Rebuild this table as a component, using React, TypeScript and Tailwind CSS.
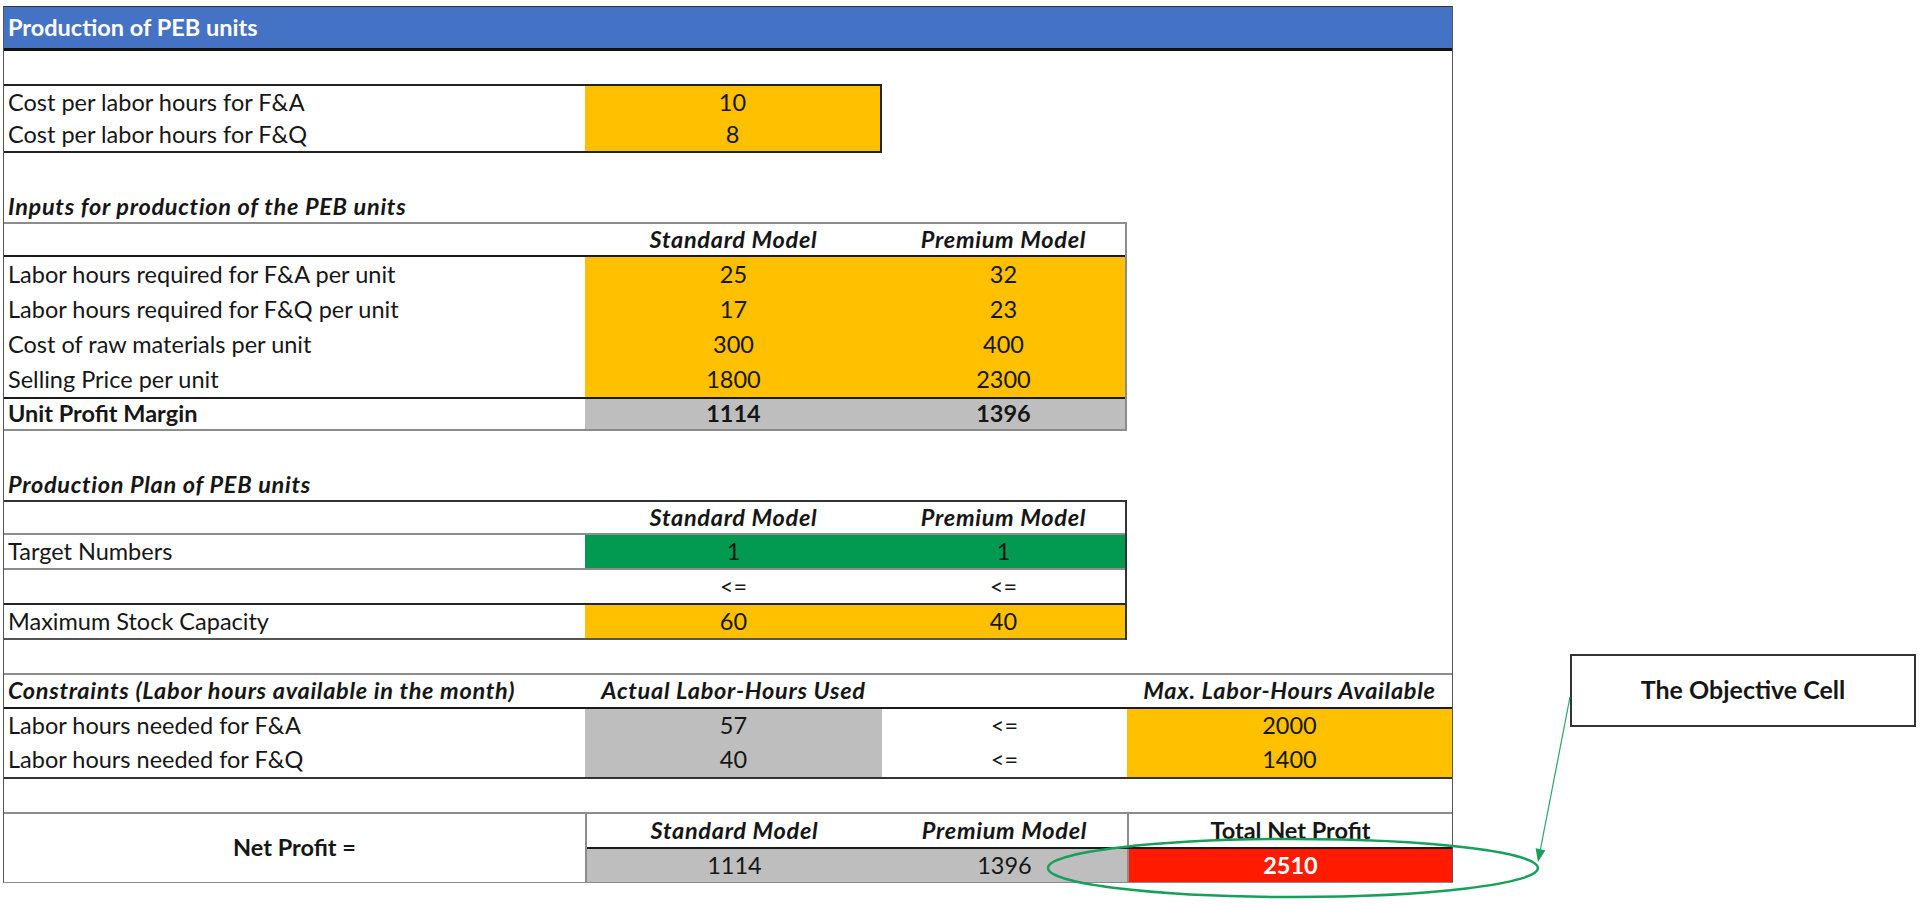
import * as React from 'react'
import clsx from 'clsx'

const yellow = 'bg-[#ffc000]'
const gray = 'bg-[#bfbebf]'
const heading = 'font-bold italic tracking-[0.7px]'

function Cell({
  w,
  children,
  className,
}: {
  w: string
  children?: React.ReactNode
  className?: string
}) {
  return <div className={clsx('flex h-full shrink-0 items-center justify-center', w, className)}>{children}</div>
}

function Label({ children, className }: { children?: React.ReactNode; className?: string }) {
  return (
    <div className={clsx('flex h-full w-[581px] shrink-0 items-center pl-[4px]', className)}>{children}</div>
  )
}

function Title({ children }: { children: React.ReactNode }) {
  return <div className={clsx('flex h-[34px] items-end pb-[4px] pl-[4px]', heading)}>{children}</div>
}

function InputsTable() {
  const rows = [
    ['Labor hours required for F&A per unit', '25', '32'],
    ['Labor hours required for F&Q per unit', '17', '23'],
    ['Cost of raw materials per unit', '300', '400'],
    ['Selling Price per unit', '1800', '2300'],
  ]
  return (
    <div className="w-[1123px] border-r-2 border-[#8c8c8c]">
      <div className={clsx('flex h-[35px] border-t-2 border-b-2 border-t-[#8c8c8c] border-b-[#1a1a1a]', heading)}>
        <Label />
        <Cell w="w-[297px]">Standard Model</Cell>
        <Cell w="w-[243px]">Premium Model</Cell>
      </div>
      {rows.map(([label, a, b]) => (
        <div key={label} className="flex h-[35px]">
          <Label>{label}</Label>
          <Cell w="w-[297px]" className={yellow}>
            {a}
          </Cell>
          <Cell w="w-[243px]" className={yellow}>
            {b}
          </Cell>
        </div>
      ))}
      <div className="flex h-[34px] border-t-2 border-b-2 border-t-[#1a1a1a] border-b-[#8c8c8c] font-bold">
        <Label>Unit Profit Margin</Label>
        <Cell w="w-[297px]" className={gray}>
          1114
        </Cell>
        <Cell w="w-[243px]" className={gray}>
          1396
        </Cell>
      </div>
    </div>
  )
}

function PlanTable() {
  return (
    <div className="w-[1123px] border-r-2 border-[#333]">
      <div className={clsx('flex h-[35px] border-t-2 border-b-2 border-t-[#333] border-b-[#8c8c8c]', heading)}>
        <Label />
        <Cell w="w-[297px]">Standard Model</Cell>
        <Cell w="w-[243px]">Premium Model</Cell>
      </div>
      <div className="flex h-[35px] border-b-2 border-[#8c8c8c]">
        <Label>Target Numbers</Label>
        <Cell w="w-[297px]" className="bg-[#019a50]">
          1
        </Cell>
        <Cell w="w-[243px]" className="bg-[#019a50]">
          1
        </Cell>
      </div>
      <div className="flex h-[35px] border-b-2 border-[#262626]">
        <Label />
        <Cell w="w-[297px]">&lt;=</Cell>
        <Cell w="w-[243px]">&lt;=</Cell>
      </div>
      <div className="flex h-[35px] border-b-2 border-[#555]">
        <Label>Maximum Stock Capacity</Label>
        <Cell w="w-[297px]" className={yellow}>
          60
        </Cell>
        <Cell w="w-[243px]" className={yellow}>
          40
        </Cell>
      </div>
    </div>
  )
}

function Constraints() {
  return (
    <div className="border-t-2 border-b-2 border-t-[#8c8c8c] border-b-[#333]">
      <div className={clsx('flex h-[34px] border-b-2 border-[#1a1a1a]', heading)}>
        <Label>Constraints (Labor hours available in the month)</Label>
        <Cell w="w-[297px]">Actual Labor-Hours Used</Cell>
        <Cell w="w-[245px]" />
        <Cell w="w-[325px]">Max. Labor-Hours Available</Cell>
      </div>
      {[
        ['Labor hours needed for F&A', '57', '2000'],
        ['Labor hours needed for F&Q', '40', '1400'],
      ].map(([label, used, max]) => (
        <div key={label} className="flex h-[34px]">
          <Label>{label}</Label>
          <Cell w="w-[297px]" className={gray}>
            {used}
          </Cell>
          <Cell w="w-[245px]">&lt;=</Cell>
          <Cell w="w-[325px]" className={yellow}>
            {max}
          </Cell>
        </div>
      ))}
    </div>
  )
}

function NetProfit() {
  return (
    <div className="flex h-[70px] border-t-2 border-[#8c8c8c]">
      <div className="flex w-[583px] shrink-0 items-center justify-center border-r-2 border-[#8c8c8c] font-bold">
        Net Profit =
      </div>
      <div className="flex flex-col">
        <div className="flex h-[35px] border-b-2 border-[#1a1a1a]">
          <Cell w="w-[295px]" className={heading}>
            Standard Model
          </Cell>
          <Cell w="w-[245px]" className={heading}>
            Premium Model
          </Cell>
          <Cell w="w-[325px]" className="border-l-2 border-[#8c8c8c] font-bold">
            Total Net Profit
          </Cell>
        </div>
        <div className="flex h-[33px]">
          <Cell w="w-[295px]" className={gray}>
            1114
          </Cell>
          <Cell w="w-[245px]" className={gray}>
            1396
          </Cell>
          <Cell w="w-[325px]" className="border-l-2 border-[#8c8c8c] bg-[#ff1a00] font-bold text-white">
            2510
          </Cell>
        </div>
      </div>
    </div>
  )
}

export default function App() {
  return (
    <div className="relative h-[904px] w-[1920px] overflow-hidden bg-white font-[Lato,sans-serif] text-[23.5px] leading-none text-[#161616]">
      <div className="ml-[3px] mt-[6px] w-[1450px] border-x border-b border-x-[#555] border-b-[#8c8c8c]">
        <div className="flex h-[45px] items-center border-t border-b-[3px] border-t-[#333] border-b-[#111] bg-[#4472c4] pl-[4px] font-bold text-white">
          Production of PEB units
        </div>
        <div className="h-[33px]" />
        <div className="w-[878px] border-y-2 border-r-2 border-[#222]">
          <div className="flex h-[32.5px]">
            <Label>Cost per labor hours for F&amp;A</Label>
            <Cell w="w-[295px]" className={yellow}>
              10
            </Cell>
          </div>
          <div className="flex h-[32.5px]">
            <Label>Cost per labor hours for F&amp;Q</Label>
            <Cell w="w-[295px]" className={yellow}>
              8
            </Cell>
          </div>
        </div>
        <div className="h-[35px]" />
        <Title>Inputs for production of the PEB units</Title>
        <InputsTable />
        <div className="h-[35px]" />
        <Title>Production Plan of PEB units</Title>
        <PlanTable />
        <div className="h-[33px]" />
        <Constraints />
        <div className="h-[33px]" />
        <NetProfit />
      </div>

      <div className="absolute left-[1570px] top-[654px] flex h-[73px] w-[346px] items-center justify-center border-2 border-[#333] bg-white pb-[3px] text-[25px] font-bold">
        The Objective Cell
      </div>

      <svg className="pointer-events-none absolute left-0 top-0" width="1920" height="904">
        <ellipse cx="1293" cy="868" rx="245" ry="29" fill="none" stroke="#17a05a" strokeWidth="2.5" />
        <line x1="1570" y1="697" x2="1540.5" y2="849" stroke="#2aa36b" strokeWidth="1.2" />
        <polygon points="1538,862 1545.4,850.2 1535.6,848.2" fill="#17a05a" />
      </svg>
    </div>
  )
}
